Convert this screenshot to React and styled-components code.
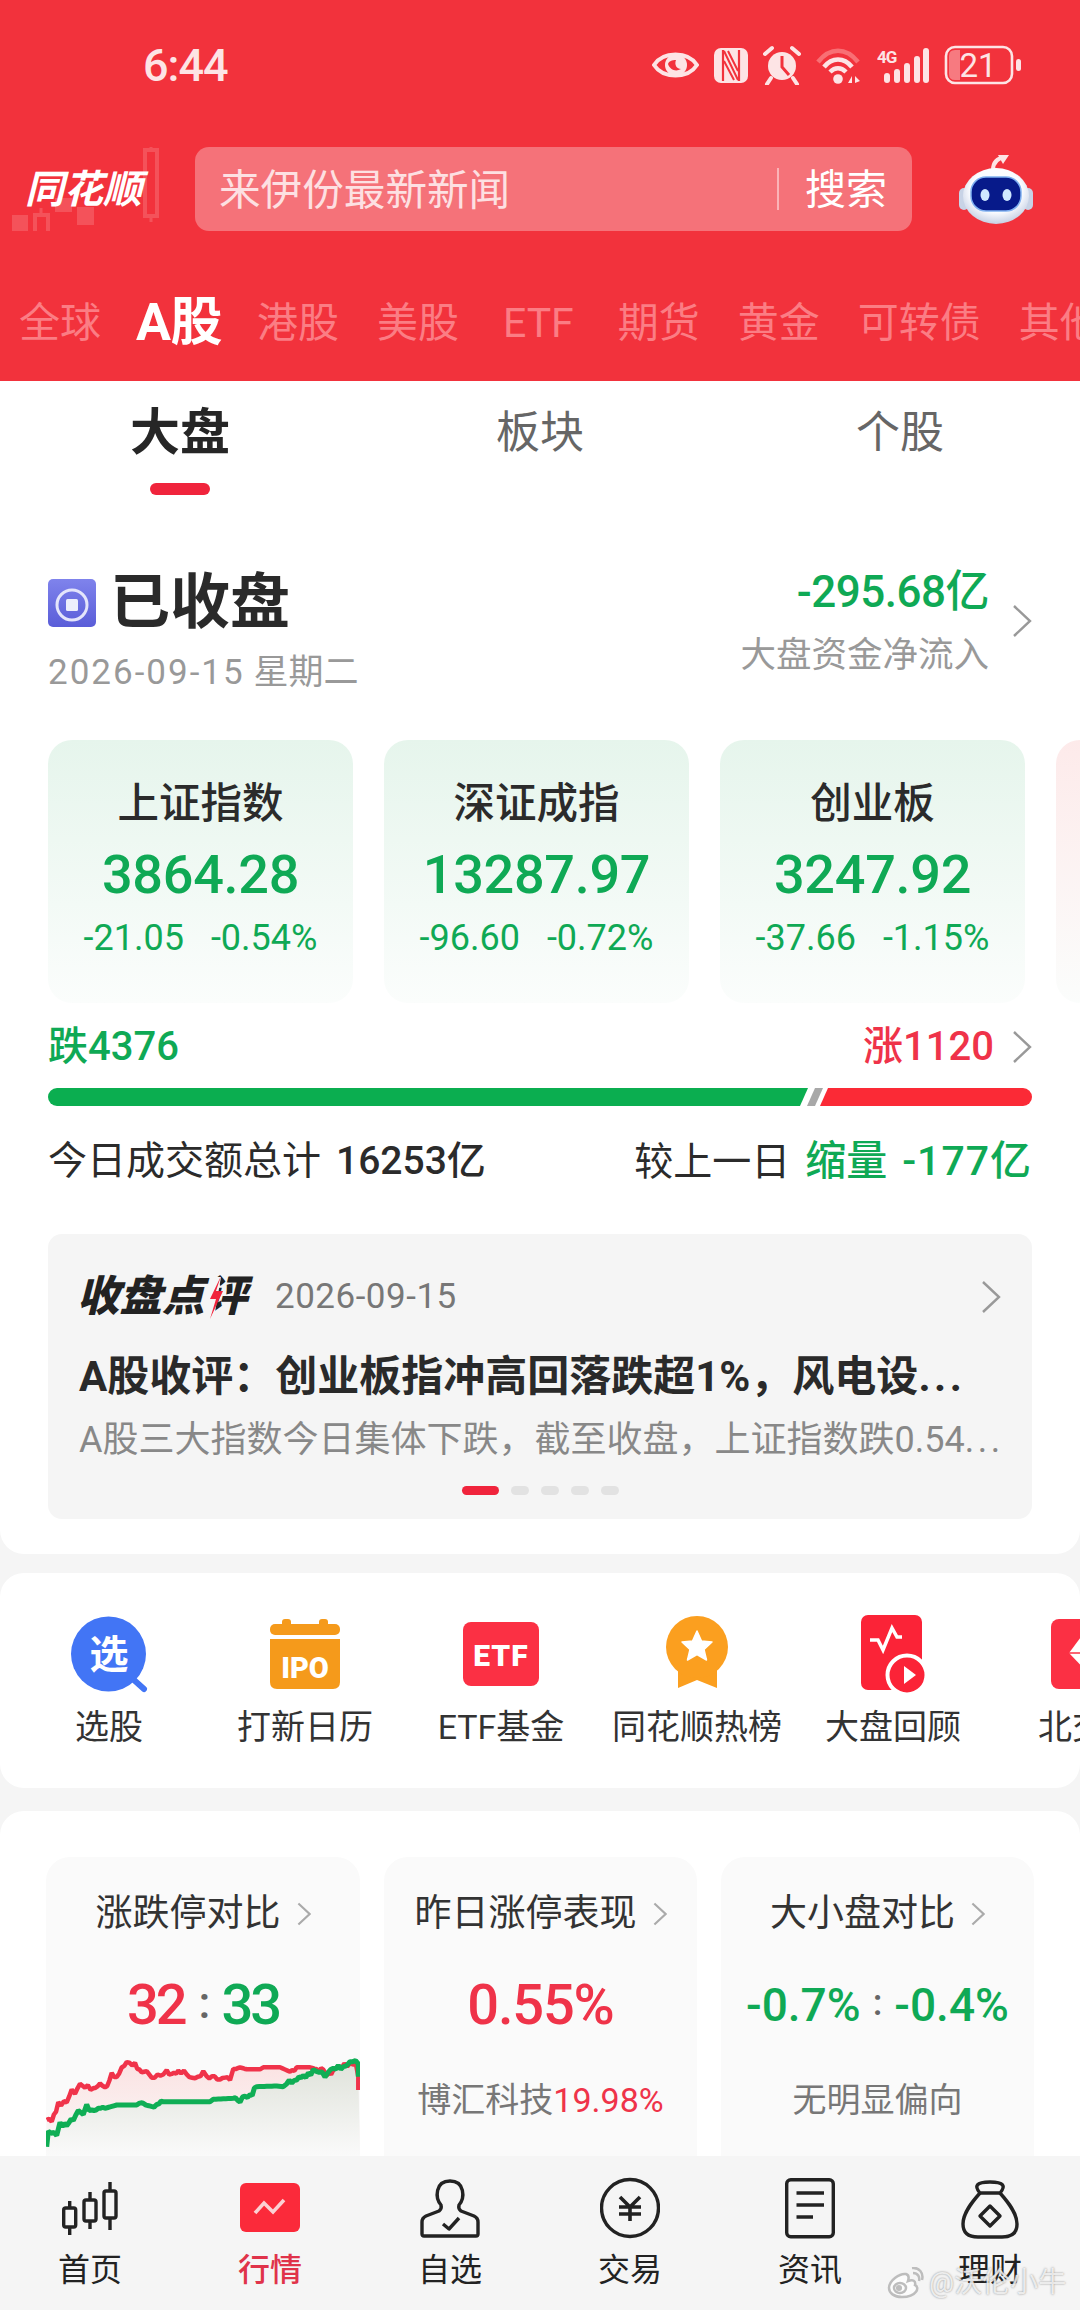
import React from "react";
import styled, { createGlobalStyle } from "styled-components";

const GREEN = "#0fa955";
const RED = "#ef3349";
const PALE = "#fde4e5";

const Global = createGlobalStyle`
  html, body { margin: 0; padding: 0; background: #f5f5f5; }
  * { box-sizing: border-box; }
  body { font-family: Roboto, "Noto Sans CJK SC", sans-serif; color: #222; }
`;

const Page = styled.div`
  width: 1080px; height: 2310px; display: flex; flex-direction: column;
  position: relative; overflow: hidden; background: #f5f5f5;
`;
const Header = styled.header`
  height: 381px; flex: none; background: #f2323c; overflow: hidden;
`;
const StatusBar = styled.div`
  height: 130px; display: flex; align-items: center; justify-content: space-between;
  padding: 0 59px 0 143px;
`;
const Time = styled.span`
  font-size: 45px; font-weight: 500; color: ${PALE}; letter-spacing: -1px; line-height: 1;
`;
const StatusIcons = styled.div`
  display: flex; align-items: center; gap: 15px;
  svg { display: block; }
`;
const SearchRow = styled.div`
  margin-top: 17px; height: 84px; display: flex; align-items: center;
`;
const LogoBox = styled.div`
  width: 195px; height: 84px; flex: none; position: relative;
  svg { position: absolute; left: 0; top: 0; }
`;
const LogoText = styled.span`
  position: absolute; left: 25px; top: 20px; font-size: 39px; line-height: 46px;
  font-weight: 700; font-style: italic; color: #fff; white-space: nowrap;
`;
const SearchBox = styled.div`
  width: 717px; height: 84px; background: #f57279; border-radius: 14px; flex: none;
  display: flex; align-items: center; padding: 0 25px 0 24px; color: #fde6e7;
`;
const Placeholder = styled.span`
  flex: 1; font-size: 41.6px; line-height: 50px; padding-top: 4px; height: 54px; color: #fde0e2; white-space: nowrap;
`;
const SearchDivider = styled.span`
  width: 2px; height: 42px; background: #fbb3b7; margin-right: 26px;
`;
const SearchBtn = styled.span`
  font-size: 41px; line-height: 50px; padding-top: 2px; height: 52px; color: #fff; white-space: nowrap;
`;
const Robot = styled.div`
  margin-left: 47px; width: 74px; height: 84px; flex: none; svg { display: block; }
`;
const MarketTabs = styled.nav`
  margin-top: 68px; height: 48px; display: flex; align-items: center; gap: 38px;
  padding-left: 19px; white-space: nowrap;
`;
const MarketTab = styled.span`
  flex: none;
  font-size: ${p => (p.$active ? 52 : 41)}px; line-height: 48px;
  font-weight: ${p => (p.$active ? 700 : 400)};
  color: ${p => (p.$active ? "#fff" : "#fb7d84")};
  letter-spacing: ${p => (p.$active ? "-0.5px" : "0")};
  margin: ${p => (p.$active ? "0 -3px 0 -3px" : p.$latin ? "0 6px" : "0")};
`;
const Scroll = styled.main`
  flex: 1; min-height: 0; overflow: hidden;
`;
const Panel = styled.section`
  height: 1173px; background: #fff; border-radius: 0 0 24px 24px; overflow: hidden;
`;
const SubTabs = styled.div`
  display: grid; grid-template-columns: repeat(3, 1fr); height: 116px;
`;
const SubTab = styled.div`
  display: flex; flex-direction: column; align-items: center; padding-top: 27px;
`;
const SubTabLabel = styled.span`
  font-size: ${p => (p.$active ? 50 : 44)}px; line-height: 50px;
  font-weight: ${p => (p.$active ? 700 : 400)};
  color: ${p => (p.$active ? "#262626" : "#666")};
`;
const SubTabBar = styled.span`
  margin-top: 25px; width: 60px; height: 12px; border-radius: 6px; background: #f0243c;
`;
const Body = styled.div`
  padding: 69px 48px 0;
`;
const Summary = styled.div`
  display: flex; justify-content: space-between; align-items: flex-start;
`;
const SummaryLeft = styled.div`
  padding-top: 8px;
`;
const ClosedRow = styled.div`
  height: 58px; display: flex; align-items: center; gap: 14px;
  svg { display: block; }
`;
const ClosedText = styled.span`
  font-size: 60px; line-height: 58px; font-weight: 700; color: #2a2a2a; white-space: nowrap;
`;
const DateLine = styled.div`
  margin-top: 21px; font-size: 35px; line-height: 40px; color: #999; white-space: nowrap;
`;
const DateNum = styled.span`
  letter-spacing: 2px;
`;
const FlowBlock = styled.div`
  display: flex; align-items: center; gap: 23px;
`;
const FlowText = styled.div`
  display: flex; flex-direction: column; align-items: flex-end; padding-top: 1px;
`;
const FlowValue = styled.span`
  font-size: 44px; line-height: 50px; font-weight: 500; color: ${GREEN}; white-space: nowrap; letter-spacing: -0.5px;
`;
const FlowLabel = styled.span`
  margin-top: 18px; font-size: 35.5px; line-height: 40px; color: #999; white-space: nowrap;
`;
const IndexRow = styled.div`
  margin: 47px -48px 0 0; display: flex; gap: 31px; overflow: hidden;
`;
const IndexCard = styled.div`
  width: 305px; height: 263px; flex: none; border-radius: 24px;
  background: linear-gradient(180deg, ${p => (p.$up ? "#fdeaea" : "#e6f5ec")} 0%, #fbfdfc 100%);
  display: flex; flex-direction: column; align-items: center; padding-top: 41px;
`;
const IndexName = styled.span`
  font-size: 41.5px; line-height: 46px; font-weight: 500; color: #2b2b2b; white-space: nowrap;
`;
const IndexValue = styled.span`
  margin-top: 18px; font-size: 54px; line-height: 60px; font-weight: 500; color: ${GREEN}; letter-spacing: -0.3px;
`;
const IndexDelta = styled.div`
  margin-top: 13px; display: flex; gap: 27px; font-size: 36px; line-height: 40px; color: ${GREEN}; white-space: nowrap;
`;
const BreadthRow = styled.div`
  margin-top: 22px; height: 44px; display: flex; justify-content: space-between; align-items: center;
`;
const BreadthText = styled.span`
  font-size: 40px; line-height: 44px; font-weight: 500; color: ${p => p.$c};
`;
const BreadthRight = styled.div`
  display: flex; align-items: center; gap: 18px;
`;
const Bar = styled.div`
  margin-top: 19px; height: 18px; display: flex; border-radius: 9px; overflow: hidden;
  svg { display: block; }
`;
const VolumeRow = styled.div`
  margin-top: 32px; height: 46px; display: flex; justify-content: space-between; align-items: center;
  font-size: 39px; line-height: 46px; color: #2b2b2b; white-space: nowrap;
`;
const VolNum = styled.span`
  font-weight: 500; margin-left: 15px;
`;
const VolGreen = styled.span`
  font-weight: 500; color: ${GREEN}; margin-left: 15px; font-size: 41px; letter-spacing: ${p => p.$ls || 0}px;
`;
const ReviewCard = styled.div`
  margin-top: 50px; height: 285px; background: #f5f5f5; border-radius: 14px; padding: 40px 31px 0;
`;
const ReviewHead = styled.div`
  height: 46px; display: flex; align-items: center;
`;
const ReviewLogo = styled.span`
  position: relative; margin-left: -2px; font-size: 42.5px; line-height: 46px; font-weight: 900; font-style: italic; color: #222; white-space: nowrap;
  svg { position: absolute; left: 129px; top: 0; }
`;
const ReviewDate = styled.span`
  margin-left: 28px; flex: 1; font-size: 35px; line-height: 46px; color: #777; letter-spacing: 0.5px;
`;
const ReviewTitle = styled.div`
  margin-top: 33px; font-size: 42px; line-height: 48px; font-weight: 700; color: #2a2a2a; white-space: nowrap;
`;
const ReviewSub = styled.div`
  margin-top: 18px; font-size: 36px; line-height: 42px; color: #888; white-space: nowrap;
`;
const Ellipsis = styled.span`
  letter-spacing: 3.5px;
`;
const Dots = styled.div`
  margin-top: 25px; display: flex; justify-content: center; gap: 12px;
`;
const Dot = styled.span`
  width: ${p => (p.$on ? 37 : 18)}px; height: 9px; border-radius: 5px;
  background: ${p => (p.$on ? "#f0243c" : "#e2e2e2")};
`;
const ShortcutCard = styled.section`
  margin-top: 19px; height: 215px; background: #fff; border-radius: 24px;
  padding: 41px 0 0 11px; display: flex; overflow: hidden;
`;
const Shortcut = styled.div`
  width: 196px; flex: none; display: flex; flex-direction: column; align-items: center;
  svg { display: block; }
`;
const ShortcutLabel = styled.span`
  margin-top: 13px; font-size: 34px; line-height: 40px; color: #333; white-space: nowrap;
`;
const StatsCard = styled.section`
  margin-top: 23px; height: 500px; background: #fff; border-radius: 24px;
  padding: 46px 47px 0 46px; display: grid; grid-template-columns: 314px 313px 313px; column-gap: 24px; align-items: start;
`;
const StatCard = styled.div`
  height: 440px; background: #fafafa; border-radius: 24px; padding-top: 35px; overflow: hidden;
  svg { display: block; }
`;
const StatTitle = styled.div`
  height: 44px; display: flex; align-items: center; justify-content: center; gap: 16px;
  font-size: 37px; line-height: 44px; color: #333; white-space: nowrap;
`;
const StatValue = styled.div`
  margin-top: 34px; height: 70px; display: flex; align-items: center; justify-content: center;
  font-size: ${p => p.$size || 56}px; line-height: 70px; font-weight: 500; white-space: nowrap;
  letter-spacing: ${p => p.$ls || 0}px;
`;
const Tone = styled.span`
  color: ${p => p.$c};
`;
const Colon = styled.span`
  color: #666; margin: 0 ${p => p.$m || 12}px; font-size: 0.8em; position: relative; top: -2px;
`;
const StatNote = styled.div`
  margin-top: 38px; text-align: center; font-size: 34px; line-height: 44px; color: #777; white-space: nowrap;
`;
const Chart = styled.div`
  margin-top: 17px; height: 99px;
`;
const BottomNav = styled.nav`
  flex: none; height: 154px; background: #f5f5f5; padding-top: 20px;
  display: grid; grid-template-columns: repeat(6, 180px);
`;
const NavItem = styled.div`
  display: flex; flex-direction: column; align-items: center;
  svg { display: block; }
`;
const NavLabel = styled.span`
  margin-top: 11px; font-size: 32px; line-height: 38px; color: ${p => (p.$active ? "#e0334a" : "#222")};
  font-weight: ${p => (p.$active ? 500 : 400)};
`;
const Watermark = styled.div`
  position: absolute; left: 886px; top: 2266px; display: flex; align-items: center; gap: 5px;
  font-size: 28px; line-height: 34px; color: rgba(255,255,255,0.78);
  text-shadow: 0 0 2px rgba(90,90,90,0.7); white-space: nowrap;
  svg { display: block; }
`;

const Chevron = ({ h = 32, w = 20, c = "#999", sw = 2.4 }) => (
  <svg width={w} height={h} viewBox="0 0 20 32" style={{ flex: "none", display: "block" }}>
    <polyline points="2,1 18,16 2,31" fill="none" stroke={c} strokeWidth={sw} />
  </svg>
);

function EyeIcon() {
  return (
    <svg width="47" height="40" viewBox="651 44 47 40">
      <path d="M653 64 C662 50 687 50 696 64 C687 78 662 78 653 64 Z" fill="none" stroke={PALE} strokeWidth="4" />
      <circle cx="675" cy="64" r="11" fill={PALE} />
      <path d="M667 63 C669 69 675 71 680 68 C676 68 673 64 675 59 C671 59 668 60 667 63 Z" fill="#f2323c" />
    </svg>
  );
}
function NfcIcon() {
  return (
    <svg width="34" height="40" viewBox="713 44 34 40">
      <rect x="713" y="47" width="34" height="35" rx="7" fill={PALE} />
      <path d="M722 49 V80 M738 49 V80" stroke="#f2323c" strokeWidth="2.2" />
      <path d="M723 50 L737 79 M723 60 L733 79 M727 50 L737 70" stroke="#f2323c" strokeWidth="2" />
    </svg>
  );
}
function AlarmIcon() {
  return (
    <svg width="38" height="40" viewBox="762 44 38 40">
      <circle cx="781" cy="65" r="14" fill={PALE} />
      <path d="M781 55 V66 L788 74" fill="none" stroke="#f2323c" strokeWidth="3" />
      <path d="M764 53 L771 47 M798 53 L791 47 M770 77 L766 83 M792 77 L796 83" stroke={PALE} strokeWidth="4" strokeLinecap="round" />
    </svg>
  );
}
function WifiIcon() {
  return (
    <svg width="46" height="40" viewBox="815 44 46 40">
      <path d="M817 61 C829 46 845 46 857 61" fill="none" stroke="#f86f74" strokeWidth="4.5" />
      <path d="M823 66 C831 56 843 56 851 66" fill="none" stroke={PALE} strokeWidth="4.5" />
      <path d="M829 71 C834 66 840 66 845 71" fill="none" stroke={PALE} strokeWidth="4.5" />
      <circle cx="837" cy="78" r="4.8" fill={PALE} />
      <path d="M851 75 V82 L847 82 Z M854 75 V82 L859 80 Z" fill={PALE} />
    </svg>
  );
}
function SignalIcon() {
  return (
    <svg width="52" height="40" viewBox="876 44 52 40">
      <text x="876" y="62" fontSize="17" fontWeight="700" fill={PALE} fontFamily="Roboto, sans-serif" letterSpacing="-1">4G</text>
      <rect x="883" y="72" width="6" height="10" rx="3" fill={PALE} />
      <rect x="893" y="68" width="6" height="14" rx="3" fill={PALE} />
      <rect x="903" y="62" width="6" height="20" rx="3" fill={PALE} />
      <rect x="913" y="55" width="6" height="27" rx="3" fill={PALE} />
      <rect x="922" y="47" width="6" height="35" rx="3" fill={PALE} />
    </svg>
  );
}
function BatteryIcon() {
  return (
    <svg width="77" height="40" viewBox="944 44 77 40">
      <rect x="946" y="46" width="66" height="36" rx="9" fill="none" stroke={PALE} strokeWidth="2.6" />
      <path d="M949 55 Q949 49 955 49 H960 V79 H955 Q949 79 949 73 Z" fill="#f77a80" />
      <text x="978" y="76" textAnchor="middle" fontSize="33" fill={PALE} fontFamily="Roboto, sans-serif">21</text>
      <rect x="1016" y="58" width="5" height="12" rx="2.5" fill={PALE} />
    </svg>
  );
}
function LogoCandles() {
  const c = "#f4525a";
  return (
    <svg width="195" height="84" viewBox="0 147 195 84">
      <rect x="12" y="215" width="16" height="18" fill={c} />
      <path d="M41 208 V240" stroke={c} strokeWidth="3" />
      <rect x="35" y="215" width="13" height="18" fill="#f2323c" stroke={c} strokeWidth="4" />
      <rect x="55" y="198" width="17" height="14" fill={c} />
      <rect x="77" y="207" width="17" height="18" fill={c} />
      <path d="M151 142 V222" stroke={c} strokeWidth="3" />
      <rect x="145" y="150" width="12" height="66" fill="#f2323c" stroke={c} strokeWidth="4" />
    </svg>
  );
}
function RobotIcon() {
  return (
    <svg width="74" height="84" viewBox="959 147 74 84">
      <defs>
        <radialGradient id="rb" cx="50%" cy="40%" r="65%"><stop offset="60%" stopColor="#fbfcff" /><stop offset="100%" stopColor="#b9c6de" /></radialGradient>
      </defs>
      <path d="M993 170 C993 162 998 158 1005 157" fill="none" stroke="#fde4e5" strokeWidth="4" />
      <path d="M998 155 L1009 155 L1003 164 Z" fill="#fde4e5" />
      <rect x="959" y="188" width="10" height="22" rx="5" fill="#c8d3e6" />
      <rect x="1023" y="188" width="10" height="22" rx="5" fill="#c8d3e6" />
      <ellipse cx="996" cy="196" rx="33" ry="28" fill="url(#rb)" />
      <rect x="971" y="177" width="50" height="34" rx="15" fill="#071a8a" stroke="#7fb0f0" strokeWidth="1.5" />
      <ellipse cx="985" cy="195" rx="4.5" ry="6" fill="#cfe8ff" />
      <ellipse cx="1007" cy="195" rx="4.5" ry="6" fill="#cfe8ff" />
    </svg>
  );
}
function StopIcon() {
  return (
    <svg width="48" height="48" viewBox="0 0 48 48">
      <defs>
        <linearGradient id="st" x1="0" y1="0" x2="0" y2="1"><stop offset="0" stopColor="#7f83ec" /><stop offset="1" stopColor="#5a5dd8" /></linearGradient>
      </defs>
      <rect width="48" height="48" rx="5" fill="url(#st)" />
      <circle cx="24" cy="26" r="15" fill="none" stroke="#e4e5fb" strokeWidth="3" />
      <rect x="18" y="20" width="12" height="12" rx="1.5" fill="#eceefc" />
    </svg>
  );
}
function SplitBar() {
  return (
    <svg width="984" height="18" viewBox="48 1088 984 18">
      <rect x="48" y="1088" width="984" height="18" fill="#fff" />
      <path d="M48 1088 H808 L800 1106 H48 Z" fill="#0bae50" />
      <path d="M815 1088 H823 L815 1106 H807 Z" fill="#a8a8a8" />
      <path d="M828 1088 H1032 V1106 H820 Z" fill="#fb2a36" />
    </svg>
  );
}
function LogoBolt() {
  return (
    <svg width="18" height="46" viewBox="0 0 18 46">
      <path d="M5 3 H15 L8 44 H-2 Z" fill="#f5f5f5" />
      <path d="M15 2 L4 25 H10 L4 45 L17 17 H10 Z" fill="#f0243c" />
    </svg>
  );
}

const SHORTCUTS = [
  ["选股", (
    <svg width="80" height="80" viewBox="70 1614 80 80" key="a">
      <path d="M135 1680 L145 1689" stroke="#4275f5" strokeWidth="6" strokeLinecap="round" />
      <circle cx="109.5" cy="1654" r="37.5" fill="#4275f5" />
      <text x="110" y="1668" textAnchor="middle" fontSize="39" fontWeight="700" fill="#fff">选</text>
    </svg>
  )],
  ["打新日历", (
    <svg width="80" height="80" viewBox="265 1614 80 80" key="b">
      <rect x="282" y="1619" width="9" height="10" rx="3" fill="#f59a1b" />
      <rect x="319" y="1619" width="9" height="10" rx="3" fill="#f59a1b" />
      <rect x="270" y="1624" width="70" height="11" rx="5" fill="#f59a1b" />
      <path d="M270 1639 H340 V1682 Q340 1689 333 1689 H277 Q270 1689 270 1682 Z" fill="#f59a1b" />
      <text x="305" y="1678" textAnchor="middle" fontSize="29" fontWeight="900" fill="#fff" fontFamily="Roboto, sans-serif">IPO</text>
    </svg>
  )],
  ["ETF基金", (
    <svg width="80" height="80" viewBox="461 1614 80 80" key="c">
      <rect x="463" y="1622" width="76" height="64" rx="8" fill="#fb3044" />
      <text x="501" y="1666" textAnchor="middle" fontSize="30" fontWeight="900" fill="#fff" fontFamily="Roboto, sans-serif" letterSpacing="1">ETF</text>
    </svg>
  )],
  ["同花顺热榜", (
    <svg width="80" height="80" viewBox="657 1614 80 80" key="d">
      <path d="M678 1668 V1688 L697 1680 L717 1688 V1668 Z" fill="#fb9f1f" />
      <circle cx="697" cy="1647" r="31" fill="#fb9f1f" />
      <path d="M697 1631 L701.5 1641 L712 1642 L704 1649.5 L706.5 1660 L697 1654.5 L687.5 1660 L690 1649.5 L682 1642 L692.5 1641 Z" fill="#fff" stroke="#fff" strokeLinejoin="round" strokeWidth="1.5" />
    </svg>
  )],
  ["大盘回顾", (
    <svg width="80" height="80" viewBox="853 1616 80 80" key="e">
      <rect x="861" y="1617" width="61" height="75" rx="7" fill="#fb2337" />
      <path d="M870 1642 H878 L883 1652 L892 1630 L897 1639 H902" fill="none" stroke="#fff" strokeWidth="3.5" />
      <circle cx="907" cy="1677" r="19.5" fill="#fb2337" stroke="#fff" strokeWidth="4" />
      <path d="M904 1668 L916 1677 L904 1686 Z" fill="#fff" />
    </svg>
  )],
  ["北交所", (
    <svg width="80" height="80" viewBox="1050 1614 80 80" key="f">
      <rect x="1052" y="1619" width="76" height="70" rx="8" fill="#fb3044" />
      <path d="M1070 1653 L1082 1637 H1110 L1118 1653 L1094 1678 Z" fill="#fff" />
      <path d="M1068 1653 H1090" stroke="#fb3044" strokeWidth="1.5" />
    </svg>
  )],
];

const NAV = [
  ["首页", (
    <svg width="60" height="64" viewBox="60 2176 60 64" key="a" fill="none" stroke="#222" strokeWidth="3.4">
      <rect x="63.7" y="2208" width="12" height="19" rx="2" />
      <path d="M69.7 2201 V2208 M69.7 2227 V2235" />
      <rect x="84" y="2200" width="12" height="21" rx="2" />
      <path d="M90 2192 V2200 M90 2221 V2229" />
      <rect x="104" y="2191" width="12" height="27" rx="2" />
      <path d="M110 2182 V2191 M110 2218 V2230" />
    </svg>
  )],
  ["行情", (
    <svg width="60" height="64" viewBox="240 2176 60 64" key="b" fill="none">
      <rect x="240" y="2183" width="60" height="49" rx="6" fill="#fb2a3a" />
      <path d="M255 2213 L264 2203 L273 2212 L284 2200" stroke="#fbd0d3" strokeWidth="3.6" />
    </svg>
  )],
  ["自选", (
    <svg width="60" height="64" viewBox="0 0 60 64" key="c" fill="none" stroke="#222" strokeWidth="3.4" strokeLinejoin="round">
      <path d="M2 58 V46 Q2 42 6 40 L19 35 Q22 33 21 29 C15 22 15 5 30 5 C45 5 45 22 39 29 Q38 33 41 35 L54 40 Q58 42 58 46 V58 Q58 60 56 60 H4 Q2 60 2 58 Z" />
      <path d="M23 48 L29 53 L39 42" />
    </svg>
  )],
  ["交易", (
    <svg width="60" height="64" viewBox="0 0 60 64" key="d" fill="none" stroke="#222" strokeWidth="3.4">
      <circle cx="30" cy="32" r="28.5" />
      <path d="M20 21 L30 31 L40 21 M30 31 V45 M19 31 H41 M19 38 H41" strokeWidth="3.6" />
    </svg>
  )],
  ["资讯", (
    <svg width="60" height="64" viewBox="0 0 60 64" key="e" fill="none" stroke="#222" strokeWidth="3.4">
      <rect x="6.7" y="3.7" width="46.6" height="57" rx="4" />
      <path d="M16.5 17 H44 M16.5 29 H44 M16.5 41 H33" />
    </svg>
  )],
  ["理财", (
    <svg width="60" height="64" viewBox="0 0 60 64" key="f" fill="none" stroke="#222" strokeWidth="3.4" strokeLinejoin="round">
      <path d="M20 17 C14 10 16 6 30 6 C44 6 46 10 40 17 Z" />
      <path d="M20 17 C12 26 3 37 3 48 C3 58 10 61 18 61 H42 C50 61 57 58 57 48 C57 37 48 26 40 17" />
      <path d="M30 30 L40 40 L30 50 L20 40 Z" />
    </svg>
  )],
];

const RED_PTS = [[50,420],[65,425],[85,370],[110,370],[125,335],[135,335],[150,315],[165,320],[190,325],[210,310],[225,325],[245,285],[260,285],[290,240],[315,255],[335,280],[350,270],[365,290],[400,290],[410,270],[425,285],[445,275],[470,280],[495,295],[520,280],[530,292],[570,292],[600,300],[610,270],[630,262],[650,268],[690,268],[700,262],[750,262],[780,275],[800,262],[840,262],[860,268],[880,272],[890,290],[910,270],[960,250],[978,250],[985,290],[985,330]];
const GREEN_PTS = [[50,500],[55,460],[80,460],[90,430],[110,440],[130,415],[145,395],[160,400],[170,380],[185,390],[205,385],[225,385],[260,375],[320,375],[340,370],[380,380],[400,365],[540,365],[550,358],[610,355],[630,360],[660,350],[680,320],[740,318],[760,320],[770,305],[800,300],[820,290],[850,275],[885,285],[910,265],[940,260],[960,245],[985,245],[985,290]];

function jag(pts, flat) {
  const out = [];
  let seed = 7;
  for (let i = 0; i < pts.length - 1; i++) {
    const [x0, y0] = pts[i];
    const [x1, y1] = pts[i + 1];
    const n = Math.max(1, Math.round((x1 - x0) / 8));
    for (let k = 0; k < n; k++) {
      const t = k / n;
      const zx = x0 + (x1 - x0) * t;
      seed = (seed * 73 + 11) % 101;
      const isFlat = flat.some(([a, b]) => zx >= a && zx <= b);
      const noise = isFlat ? 0 : ((seed % 5) - 2) * 3.2;
      out.push([zx / 3 - 16, (y0 + (y1 - y0) * t + noise) / 3 - 77]);
    }
  }
  const last = pts[pts.length - 1];
  out.push([last[0] / 3 - 16, last[1] / 3 - 77]);
  return out;
}
const toPath = p => p.map(([x, y], i) => `${i ? "L" : "M"}${x.toFixed(1)} ${y.toFixed(1)}`).join(" ");
const redLine = jag(RED_PTS, [[620, 780], [800, 860]]);
const greenLine = jag(GREEN_PTS, [[225, 320], [400, 610], [680, 760]]);

function LimitChart() {
  return (
    <svg width="314" height="99" viewBox="0 0 314 99">
      <defs>
        <linearGradient id="pk" x1="0" y1="0" x2="0" y2="1"><stop offset="0" stopColor="#fbe2e2" /><stop offset="1" stopColor="#fafafa" /></linearGradient>
        <linearGradient id="gy" x1="0" y1="0" x2="0" y2="1"><stop offset="0" stopColor="#dfe2da" /><stop offset="1" stopColor="#fafafa" /></linearGradient>
      </defs>
      <path d={toPath(redLine) + " L314 99 L0 99 Z"} fill="url(#pk)" />
      <path d={toPath(greenLine) + " L314 99 L0 99 Z"} fill="url(#gy)" />
      <path d={toPath(redLine)} fill="none" stroke="#f0334a" strokeWidth="4.5" strokeLinejoin="bevel" />
      <path d={toPath(greenLine)} fill="none" stroke="#0fae55" strokeWidth="5" strokeLinejoin="bevel" />
    </svg>
  );
}

const INDICES = [
  ["上证指数", "3864.28", "-21.05", "-0.54%"],
  ["深证成指", "13287.97", "-96.60", "-0.72%"],
  ["创业板", "3247.92", "-37.66", "-1.15%"],
];
const MARKETS = ["全球", "A股", "港股", "美股", "ETF", "期货", "黄金", "可转债", "其他"];

export default function App() {
  return (
    <Page>
      <Global />
      <Header>
        <StatusBar>
          <Time>6:44</Time>
          <StatusIcons>
            <EyeIcon /><NfcIcon /><AlarmIcon /><WifiIcon /><SignalIcon /><BatteryIcon />
          </StatusIcons>
        </StatusBar>
        <SearchRow>
          <LogoBox>
            <LogoCandles />
            <LogoText>同花顺</LogoText>
          </LogoBox>
          <SearchBox>
            <Placeholder>来伊份最新新闻</Placeholder>
            <SearchDivider />
            <SearchBtn>搜索</SearchBtn>
          </SearchBox>
          <Robot><RobotIcon /></Robot>
        </SearchRow>
        <MarketTabs>
          {MARKETS.map(m => <MarketTab key={m} $active={m === "A股"} $latin={m === "ETF"}>{m}</MarketTab>)}
        </MarketTabs>
      </Header>
      <Scroll>
        <Panel>
          <SubTabs>
            <SubTab><SubTabLabel $active>大盘</SubTabLabel><SubTabBar /></SubTab>
            <SubTab><SubTabLabel>板块</SubTabLabel></SubTab>
            <SubTab><SubTabLabel>个股</SubTabLabel></SubTab>
          </SubTabs>
          <Body>
            <Summary>
              <SummaryLeft>
                <ClosedRow><StopIcon /><ClosedText>已收盘</ClosedText></ClosedRow>
                <DateLine><DateNum>2026-09-15</DateNum> 星期二</DateLine>
              </SummaryLeft>
              <FlowBlock>
                <FlowText>
                  <FlowValue>-295.68亿</FlowValue>
                  <FlowLabel>大盘资金净流入</FlowLabel>
                </FlowText>
                <Chevron />
              </FlowBlock>
            </Summary>
            <IndexRow>
              {INDICES.map(([n, v, a, b]) => (
                <IndexCard key={n}>
                  <IndexName>{n}</IndexName>
                  <IndexValue>{v}</IndexValue>
                  <IndexDelta><span>{a}</span><span>{b}</span></IndexDelta>
                </IndexCard>
              ))}
              <IndexCard $up />
            </IndexRow>
            <BreadthRow>
              <BreadthText $c={GREEN}>跌4376</BreadthText>
              <BreadthRight>
                <BreadthText $c={RED}>涨1120</BreadthText>
                <Chevron />
              </BreadthRight>
            </BreadthRow>
            <Bar><SplitBar /></Bar>
            <VolumeRow>
              <span>今日成交额总计<VolNum>16253亿</VolNum></span>
              <span>较上一日<VolGreen>缩量</VolGreen><VolGreen $ls={1}>-177亿</VolGreen></span>
            </VolumeRow>
            <ReviewCard>
              <ReviewHead>
                <ReviewLogo>收盘点评<LogoBolt /></ReviewLogo>
                <ReviewDate>2026-09-15</ReviewDate>
                <Chevron />
              </ReviewHead>
              <ReviewTitle>A股收评：创业板指冲高回落跌超1%，风电设<Ellipsis>...</Ellipsis></ReviewTitle>
              <ReviewSub>A股三大指数今日集体下跌，截至收盘，上证指数跌0.54<Ellipsis>...</Ellipsis></ReviewSub>
              <Dots>
                <Dot $on /><Dot /><Dot /><Dot /><Dot />
              </Dots>
            </ReviewCard>
          </Body>
        </Panel>
        <ShortcutCard>
          {SHORTCUTS.map(([label, icon]) => (
            <Shortcut key={label}>{icon}<ShortcutLabel>{label}</ShortcutLabel></Shortcut>
          ))}
        </ShortcutCard>
        <StatsCard>
          <StatCard>
            <StatTitle>涨跌停对比<Chevron w={14} h={24} c="#aaa" sw={3} /></StatTitle>
            <StatValue $ls={-3}>
              <Tone $c={RED}>32</Tone><Colon $m={14}>:</Colon><Tone $c={GREEN}>33</Tone>
            </StatValue>
            <Chart><LimitChart /></Chart>
          </StatCard>
          <StatCard>
            <StatTitle>昨日涨停表现<Chevron w={14} h={24} c="#aaa" sw={3} /></StatTitle>
            <StatValue $ls={-1.2}><Tone $c={RED}>0.55%</Tone></StatValue>
            <StatNote>博汇科技<Tone $c={RED}>19.98%</Tone></StatNote>
          </StatCard>
          <StatCard>
            <StatTitle>大小盘对比<Chevron w={14} h={24} c="#aaa" sw={3} /></StatTitle>
            <StatValue $size={46}>
              <Tone $c={GREEN}>-0.7%</Tone><Colon $m={12}>:</Colon><Tone $c={GREEN}>-0.4%</Tone>
            </StatValue>
            <StatNote>无明显偏向</StatNote>
          </StatCard>
        </StatsCard>
      </Scroll>
      <BottomNav>
        {NAV.map(([label, icon]) => (
          <NavItem key={label}>{icon}<NavLabel $active={label === "行情"}>{label}</NavLabel></NavItem>
        ))}
      </BottomNav>
      <Watermark>
        <svg width="38" height="32" viewBox="0 0 38 32" fill="none" stroke="#bdbdbd" strokeWidth="2.5">
          <path d="M3 21 C3 13 14 6 20 7 C23 8 23 11 22 14 C27 12 30 14 29 18 C34 20 31 30 16 30 C8 30 3 26 3 21 Z" fill="rgba(255,255,255,0.7)" />
          <ellipse cx="14" cy="21" rx="6" ry="5" />
          <circle cx="13" cy="21" r="1.8" fill="#bdbdbd" />
          <path d="M27 6 C32 6 34 10 33 14 M26 1 C33 0 38 6 36 13" />
        </svg>
        <span>@沃伦小牛</span>
      </Watermark>
    </Page>
  );
}
